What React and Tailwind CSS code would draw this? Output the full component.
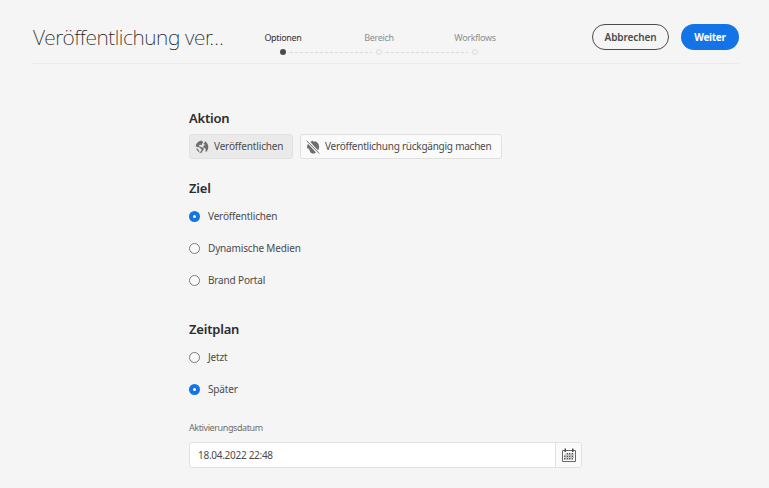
import React from 'react';

const GlobeIcon = ({ off = false }) => (
  <svg viewBox="0 0 14 14" className="h-[14px] w-[14px] shrink-0">
    {off ? (
      <>
        <path fill="#6e6e6e" d="M2.600 3.300C1.200 4.600.8 6.500 1.200 8.300l1.300.3 1.200 1.600.500 2 2 1.300 2.500-.1 1-1.200z" />
        <path fill="#6e6e6e" d="M4.300 2l2.200-1.200 1.500.9 1.500-.5c2.200.9 3.600 3 3.600 5.500 0 1.600-.5 2.900-1.400 4z" />
        <path d="M.7.900l12.600 12.600" stroke="#fafafa" strokeWidth="2.600" />
        <path d="M.5.700l12.800 12.800" stroke="#6e6e6e" strokeWidth="1" />
      </>
    ) : (
      <>
        <path fill="#6e6e6e" d="M7.300.6L4.700 1C2.400 1.900.8 4.100.7 6.500l2 .5 1.200.2 1.700 1.400 1 .5-.2 1.200-.8.900-.2 1.400-1-.5-.4-1.500-1.100-1.500-1.800-1c.6 2.600 2.600 4.600 5.200 5.100l1.200-2.300 1.300-1.500-.3-1.300-1.800-.8-1.600-.8-1.300-.2.400-1.300 1.500-.2.600.8.500-.6.100-1.200 1.500-1.100-.9-.8z" />
        <path fill="#6e6e6e" d="M9.600 1.100l.2 1.300-1.200 1.200.1.900 1.200-.1.600.7-1.700.4-.7 1.200.7 1.300 1.500.2.400 1.300-.2 1.800.5.900c1.400-1.200 2.300-3 2.300-5.100 0-2.700-1.500-4.900-3.700-6z" />
      </>
    )}
  </svg>
);

const CalendarIcon = () => (
  <svg viewBox="0 0 14 14" className="h-[14px] w-[14px]">
    <path d="M.5 2.500h13v11H.5z" fill="none" stroke="#6a6a6a" />
    <path d="M2.500.5H4v3.500H2.500zM10 .5h1.500v3.500H10z" fill="#4b4b4b" />
    <path
      d="M4.500 5h1.500v1.500H4.500zM7 5h1.500v1.500H7zM9.500 5H11v1.500H9.500zM2 7.500h1.500V9H2zM4.500 7.500h1.500V9H4.500zM7 7.500h1.500V9H7zM9.500 7.500H11V9H9.500zM2 10h1.500v1.500H2zM4.500 10h1.500v1.500H4.500zM7 10h1.500v1.500H7zM9.500 10H11v1.500H9.500z"
      fill="#5c5c5c"
    />
    <path d="M2 7h10M2 9.500h10M4 5v7M6.500 5v7M9 5v7M11.500 5v5" stroke="#b4b4b4" strokeWidth=".6" />
  </svg>
);

const Radio = ({ label, checked = false }) => (
  <label className="flex h-8 items-center gap-[8px]">
    {checked ? (
      <span className="flex h-[11px] w-[11px] items-center justify-center rounded-full bg-[#1473e6]">
        <span className="h-[3px] w-[3px] rounded-full bg-white" />
      </span>
    ) : (
      <span className="h-[11px] w-[11px] rounded-full border border-[#7b7b7b] bg-[#fafafa]" />
    )}
    <span className="whitespace-nowrap">{label}</span>
  </label>
);

const Step = ({ label, active = false }) => (
  <div className="flex w-24 flex-col items-center">
    <span className={active ? 'h-[18px] text-[#323232]' : 'h-[18px] text-[#8e8e8e]'}>{label}</span>
    <span className={active ? 'h-[6px] w-[6px] rounded-full bg-[#4b4b4b]' : 'h-[6px] w-[6px] rounded-full border border-[#dcdcdc]'} />
  </div>
);

const StepLine = () => (
  <svg viewBox="0 0 84 1" className="-mx-[42px] mt-[21px] h-px w-[84px] shrink-0">
    <path d="M1 .5h82" stroke="#dadada" strokeDasharray="3 2" />
  </svg>
);

const Heading = ({ children }) => (
  <h2 className="h-[18px] text-[13px] leading-[18px] font-semibold tracking-[-0.2px] text-[#2c2c2c]">{children}</h2>
);

export default function App() {
  return (
    <div className="h-[488px] w-[769px] overflow-hidden bg-[#f5f5f5] pr-[30px] pl-8 font-['Noto_Sans',sans-serif] text-[10px] leading-[14px] tracking-[-0.16px] text-[#4b4b4b]">
      <header className="flex h-[64px] border-b border-[#eaeaea]">
        <h1 className="mt-[22px] w-[203px] pl-px text-[21px] leading-[30px] font-extralight tracking-[-0.42px] whitespace-nowrap text-[#1f1f1f]">Veröffentlichung ver…</h1>
        <nav className="mt-[31px] flex text-[9px] tracking-[-0.33px]">
          <Step label="Optionen" active />
          <StepLine />
          <Step label="Bereich" />
          <StepLine />
          <Step label="Workflows" />
        </nav>
        <div className="mt-6 ml-auto flex h-[26px] gap-3 font-semibold">
          <button className="h-[26px] w-[77px] rounded-full border border-[#4b4b4b] pb-px tracking-[-0.1px]">Abbrechen</button>
          <button className="h-[26px] w-[58px] rounded-full bg-[#1473e6] pb-px font-bold tracking-[-0.3px] text-white">Weiter</button>
        </div>
      </header>
      <main className="ml-[157px] w-[393px] pt-[45px]">
        <Heading>Aktion</Heading>
        <div className="mt-[7px] flex gap-[7px]">
          <button className="flex h-[25px] w-[104px] items-center gap-[5px] rounded-[3px] border border-[#e1e1e1] bg-[#eaeaea] pl-[5px] whitespace-nowrap">
            <GlobeIcon />
            <span className="pb-px">Veröffentlichen</span>
          </button>
          <button className="flex h-[25px] w-[202px] items-center gap-[5px] rounded-[3px] border border-[#e1e1e1] bg-[#fafafa] pl-[5px] tracking-[-0.24px] whitespace-nowrap">
            <GlobeIcon off />
            <span className="pb-px">Veröffentlichung rückgängig machen</span>
          </button>
        </div>
        <section className="mt-[20px]">
          <Heading>Ziel</Heading>
          <div className="mt-[3px]">
            <Radio label="Veröffentlichen" checked />
            <Radio label="Dynamische Medien" />
            <Radio label="Brand Portal" />
          </div>
        </section>
        <section className="mt-[24px]">
          <Heading>Zeitplan</Heading>
          <div className="mt-[3px]">
            <Radio label="Jetzt" />
            <Radio label="Später" checked />
          </div>
        </section>
        <div className="mt-[16px] h-[14px] text-[9px] tracking-[-0.4px] text-[#6e6e6e]">Aktivierungsdatum</div>
        <div className="mt-[7px] flex h-[26px] rounded-[3px] border border-[#e1e1e1] bg-white">
          <div className="flex flex-1 items-center pb-px pl-[8px] tracking-[-0.28px]">18.04.2022 22:48</div>
          <button className="flex w-[26px] items-center justify-center rounded-r-[3px] border-l border-[#e1e1e1] bg-[#fafafa]">
            <CalendarIcon />
          </button>
        </div>
      </main>
    </div>
  );
}
